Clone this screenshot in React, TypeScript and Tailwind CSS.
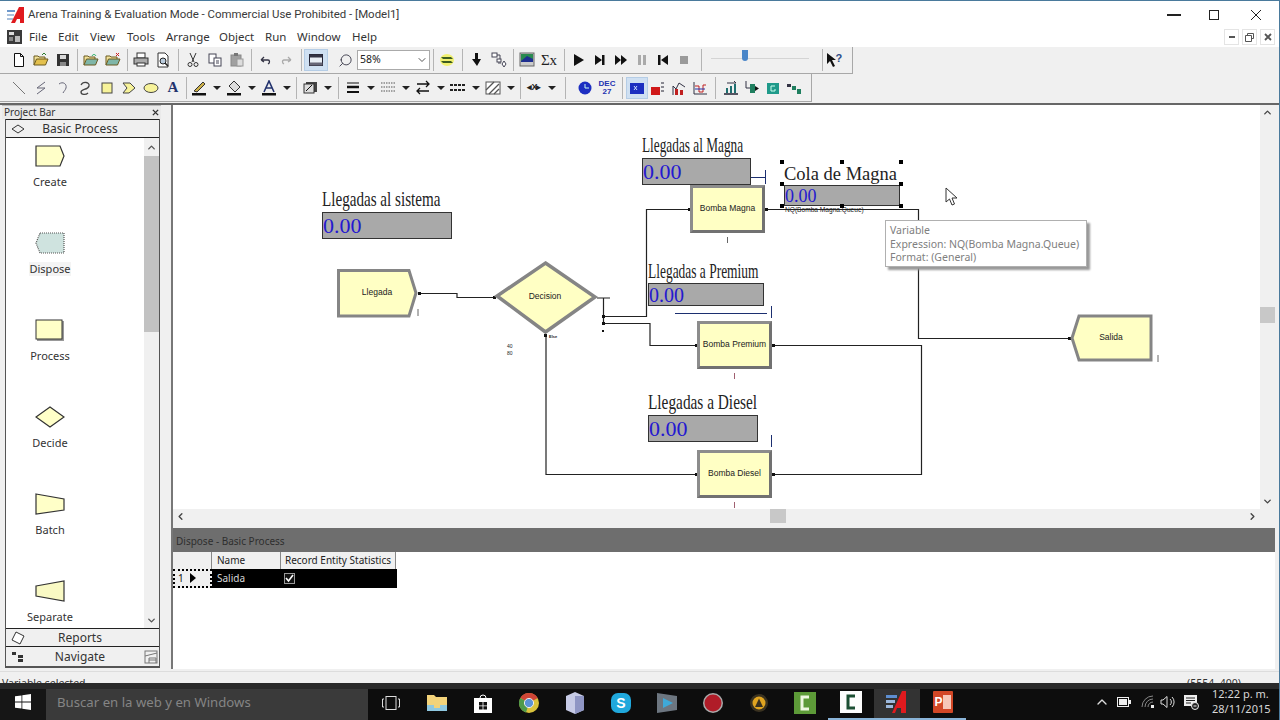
import React from 'react';
import { ChevronDown, ChevronLeft, ChevronRight, ChevronUp, Search } from 'lucide-react';

// small helper for toolbar glyphs, all drawn on a 16x16 grid
const Ico = ({ children, size = 16 }: { children: React.ReactNode; size?: number }) => (
  <svg width={size} height={size} viewBox="0 0 16 16" fill="none">
    {children}
  </svg>
);

const Tool = ({ w = 'w-[22px]', active = false, children }: { w?: string; active?: boolean; children: React.ReactNode }) => (
  <div className={`${w} h-[22px] shrink-0 flex items-center justify-center ${active ? 'bg-[#cfe0f2] border border-[#b5cde6]' : ''}`}>
    {children}
  </div>
);

const Sep = ({ w = 'w-[6px]' }: { w?: string }) => (
  <div className={`${w} h-[22px] shrink-0 flex justify-center`}>
    <div className="w-px h-full bg-[#b4b4b4]" />
  </div>
);

const Drop = ({ children }: { children: React.ReactNode }) => (
  <div className="w-[35px] h-[22px] shrink-0 flex items-center">
    <div className="w-[22px] flex justify-center">{children}</div>
    <div className="w-[13px] flex justify-center">
      <div className="w-0 h-0 border-x-[4px] border-x-transparent border-t-[4px] border-t-[#222]" />
    </div>
  </div>
);

const folder = (c: string) => (
  <>
    <path d="M1 13V4h4l1 1h6v2" stroke="#6b5a20" fill="#f3e29a" />
    <path d="M1 13l2.5-6H15l-2.5 6z" fill={c} stroke="#6b5a20" />
  </>
);

const Module = ({ x, y, label }: { x: string; y: string; label: string }) => (
  <div className={`absolute ${x} ${y} w-[75px] h-[48px] border-[3px] border-[#8c8c8c] border-r-[#717171] border-b-[#717171] bg-[#ffffc4] flex items-center justify-center pb-[2px] text-[8.5px] text-[#222] font-['Liberation_Sans',sans-serif] whitespace-nowrap`}>
    {label}
  </div>
);

const Label = ({ pos, text }: { pos: string; text: string }) => (
  <div className={`absolute ${pos} font-['Liberation_Serif',serif] text-[#222] text-[21px] leading-[22px] whitespace-nowrap origin-left`}>
    {text}
  </div>
);

const Variable = ({ pos, size = 'text-[22px]' }: { pos: string; size?: string }) => (
  <div className={`absolute ${pos} bg-[#a9a9a9] border border-[#333] flex items-center overflow-hidden font-['Liberation_Serif',serif] text-[#2418d0] ${size} leading-none`}>
    0.00
  </div>
);

const Tiny = ({ pos, color = 'text-[#222]', children }: { pos: string; color?: string; children: React.ReactNode }) => (
  <div className={`absolute ${pos} ${color} text-[6px] leading-none whitespace-nowrap font-['Liberation_Sans',sans-serif]`}>{children}</div>
);

const Handle = ({ pos }: { pos: string }) => <div className={`absolute ${pos} w-[4px] h-[4px] bg-black`} />;

const shapes: { label: string; icon: React.ReactNode; active?: boolean }[] = [
  { label: 'Create', icon: <polygon points="1,1 25,1 29,11 25,21 1,21" fill="#ffffc8" stroke="#333" strokeWidth="1.2" /> },
  { label: 'Dispose', active: true, icon: <polygon points="5,1 29,1 29,21 5,21 1,11" fill="#cfe3df" stroke="#555" strokeWidth="1.2" strokeDasharray="1 1" /> },
  { label: 'Process', icon: <><rect x="2" y="2" width="27" height="20" fill="#999" /><rect x="1" y="1" width="26" height="19" fill="#ffffc8" stroke="#333" /></> },
  { label: 'Decide', icon: <polygon points="15,1 29,11 15,21 1,11" fill="#ffffc8" stroke="#333" strokeWidth="1.2" /> },
  { label: 'Batch', icon: <polygon points="1,1 29,6 29,17 1,21" fill="#ffffc8" stroke="#333" strokeWidth="1.2" /> },
  { label: 'Separate', icon: <polygon points="1,6 29,1 29,21 1,16" fill="#f9f9c4" stroke="#333" strokeWidth="1.2" /> },
];

const taskIcons: { icon: React.ReactNode; bar?: boolean; active?: boolean }[] = [
  { icon: <svg width="18" height="18" viewBox="0 0 18 18" fill="none" stroke="#ddd"><rect x="4" y="2.5" width="10" height="13" /><path d="M2 5H0.5v8H2M16 5h1.5v8H16" /></svg> },
  { icon: <svg width="20" height="18" viewBox="0 0 20 18"><path d="M0 1h7l2 2h11v14H0z" fill="#f3d37a" /><rect x="0" y="11" width="20" height="6" fill="#8fc8e0" /><rect x="7" y="11" width="6" height="3" fill="#f3d37a" /></svg> },
  { icon: <svg width="20" height="22" viewBox="0 0 20 22"><path d="M7 6a3 3 0 016 0" stroke="#fff" fill="none" /><rect x="1" y="6" width="18" height="15" fill="#fff" /><path d="M6 10h3.6v3.4H6zM10.4 10H14v3.4h-3.6zM6 14.2h3.6v3.4H6zM10.4 14.2H14v3.4h-3.6z" fill="#111" /></svg> },
  { icon: <svg width="20" height="20" viewBox="0 0 20 20"><circle cx="10" cy="10" r="10" fill="#d9c23c" /><path d="M10 10L1.3 5A10 10 0 0110 0a10 10 0 018.7 5z" fill="#cf4536" /><path d="M10 10l-8.7-5A10 10 0 007 19.5z" fill="#4f9a4a" /><circle cx="10" cy="10" r="4.6" fill="#5b93d6" stroke="#eee" /></svg> },
  { icon: <svg width="18" height="22" viewBox="0 0 18 22"><polygon points="9,0 18,4 18,18 9,22 0,18 0,4" fill="#c7cbe6" /><polygon points="9,4 18,4 18,18 9,22" fill="#8f96c4" /></svg> },
  { icon: <svg width="20" height="22" viewBox="0 0 20 22"><rect x="0" y="1" width="20" height="20" rx="7" fill="#20a8dc" /><text x="10" y="16" textAnchor="middle" fontSize="14" fontWeight="700" fill="#fff" fontFamily="Liberation Sans, sans-serif">S</text></svg> },
  { icon: <svg width="20" height="22" viewBox="0 0 20 22"><path d="M0 1l20 3v14L0 21z" fill="#6d7680" /><polygon points="6,6 16,11 6,16" fill="#3fa9d8" /></svg> },
  { icon: <svg width="20" height="20" viewBox="0 0 20 20"><circle cx="10" cy="10" r="10" fill="#aaa" /><circle cx="10" cy="10" r="8.5" fill="#b01c28" /></svg> },
  { icon: <svg width="18" height="20" viewBox="0 0 18 20"><circle cx="9" cy="10" r="9" fill="#3a3220" /><circle cx="9" cy="10" r="6.5" fill="#e0a420" /><polygon points="9,5.5 13,14 5,14" fill="#3a3220" /></svg> },
  { icon: <svg width="22" height="22" viewBox="0 0 22 22"><rect width="22" height="22" fill="#5d9a38" /><path d="M15 5H8v12h7" stroke="#eef7e0" strokeWidth="3" fill="none" /></svg>, bar: false },
  { icon: <svg width="22" height="22" viewBox="0 0 22 22"><rect width="22" height="22" fill="#fdfdfd" /><path d="M15 5H8v12h7" stroke="#1c4f33" strokeWidth="3" fill="none" /></svg>, bar: true },
  { icon: <svg width="24" height="22" viewBox="0 0 24 22"><rect x="1" y="4" width="11" height="3" fill="#5d8ed0" /><rect x="1" y="9" width="9" height="3" fill="#9db8dc" /><rect x="1" y="14" width="7" height="3" fill="#9db8dc" /><path d="M7 22L17 0h4v22h-5v-5h-4l-2 5z" fill="#e01a1e" /></svg>, bar: true, active: true },
  { icon: <svg width="20" height="22" viewBox="0 0 20 22"><rect x="0" y="0" width="20" height="22" rx="1" fill="#d24726" /><rect x="10" y="4" width="8" height="14" fill="#f6c7b8" /><text x="5.5" y="15" textAnchor="middle" fontSize="12" fontWeight="700" fill="#fff" fontFamily="Liberation Sans, sans-serif">P</text></svg>, bar: true },
];

export default function App() {
  return (
    <div className="relative w-[1280px] h-[720px] flex flex-col overflow-hidden bg-white border-t border-r border-[#4a7a9c] font-['Noto_Sans',sans-serif] text-[#222]">
      {/* title bar */}
      <div className="h-[24px] shrink-0 flex items-center pt-[3px]">
        <div className="w-[28px] flex justify-end pr-[3px]">
          <svg width="18" height="16" viewBox="0 0 18 16">
            <rect x="0" y="3" width="8" height="2" fill="#6d98cc" />
            <rect x="0" y="7" width="7" height="2" fill="#a9c0dc" />
            <rect x="0" y="11" width="6" height="2" fill="#a9c0dc" />
            <path d="M4 16L12 0h5v16h-4v-4h-3l-2 4z" fill="#e01a1e" />
          </svg>
        </div>
        <span className="text-[11.45px] font-['Roboto',sans-serif] text-[#3a3a3a] whitespace-nowrap">Arena Training &amp; Evaluation Mode - Commercial Use Prohibited - [Model1]</span>
        <div className="ml-auto flex items-center">
          <div className="w-[14px] h-[2px] bg-[#222] mr-[28px]" />
          <div className="w-[10px] h-[10px] border border-[#222] mr-[31px]" />
          <svg width="12" height="12" viewBox="0 0 12 12" className="mr-[17px]" stroke="#222"><path d="M1 1l10 10M11 1L1 11" /></svg>
        </div>
      </div>

      {/* menu bar */}
      <div className="h-[22px] shrink-0 flex items-center pt-[2px] text-[11.5px] text-[#333]">
        <div className="w-[29px] pl-[7px]">
          <svg width="15" height="14" viewBox="0 0 15 14"><rect width="15" height="14" fill="#3a3a3a" /><rect x="2" y="2" width="5" height="3" fill="#ddd" /><rect x="8" y="6" width="5" height="6" fill="#bbb" /><rect x="2" y="7" width="4" height="4" fill="#888" /></svg>
        </div>
        <span className="w-[29px]">File</span>
        <span className="w-[32px]">Edit</span>
        <span className="w-[37px]">View</span>
        <span className="w-[39px]">Tools</span>
        <span className="w-[53px]">Arrange</span>
        <span className="w-[46px]">Object</span>
        <span className="w-[32px]">Run</span>
        <span className="w-[55px]">Window</span>
        <span>Help</span>
        <div className="ml-auto mr-[4px] flex gap-[3px] items-end">
          <div className="w-[15px] h-[16px] border border-[#e4e4e4] flex items-center justify-center"><div className="w-[6px] h-[2px] bg-[#555]" /></div>
          <div className="w-[15px] h-[16px] border border-[#e4e4e4] flex items-center justify-center">
            <svg width="9" height="9" viewBox="0 0 9 9" fill="none" stroke="#555"><path d="M2.5 2.5V.5h6v5h-2M.5 2.5h6v6h-6z" /></svg>
          </div>
          <div className="w-[15px] h-[16px] border border-[#e4e4e4] flex items-center justify-center">
            <svg width="8" height="8" viewBox="0 0 8 8" stroke="#555" strokeWidth="1.8"><path d="M1 1l6 6M7 1L1 7" /></svg>
          </div>
        </div>
      </div>

      {/* toolbars */}
      <div className="h-[58px] shrink-0 bg-[#f0f0f0] border-b-2 border-[#666]">
        <div className="w-[853px] h-[27px] flex items-center pl-[8px] border-b border-r border-[#a8a8a8]">
          <Tool><Ico><path d="M3.5 1.5h6l3 3v10h-9z M9.5 1.5v3h3" stroke="#111" fill="#fff" /></Ico></Tool>
          <Tool><Ico>{folder('#e3c04d')}<path d="M9 3l2-2 2 2" stroke="#2a7a2a" /></Ico></Tool>
          <Tool><Ico><rect x="2" y="2" width="12" height="12" fill="#333" /><rect x="5" y="3" width="6" height="4" fill="#d8d8d8" /><rect x="5" y="10" width="6" height="4" fill="#888" /></Ico></Tool>
          <Sep />
          <Tool><Ico>{folder('#7fb6a8')}<path d="M9 4c1-2 3-2 4 0" stroke="#1a5" /></Ico></Tool>
          <Tool><Ico>{folder('#7fb6a8')}<path d="M11 1l3 3M14 1l-3 3" stroke="#c22" /></Ico></Tool>
          <Sep />
          <Tool><Ico><rect x="4" y="1" width="8" height="5" fill="#fff" stroke="#333" /><rect x="1" y="6" width="14" height="6" fill="#aaa" stroke="#333" /><rect x="4" y="11" width="8" height="3" fill="#fff" stroke="#333" /></Ico></Tool>
          <Tool><Ico><path d="M3 1h7l3 3v11H3z" fill="#fff" stroke="#333" /><circle cx="8" cy="9" r="3" fill="#bcd" stroke="#222" /><path d="M10 11l3 3" stroke="#222" strokeWidth="1.5" /></Ico></Tool>
          <Sep w="w-[8px]" />
          <Tool><Ico><path d="M5 1l4 9M11 1L7 10" stroke="#333" /><circle cx="5" cy="12.5" r="2" stroke="#333" /><circle cx="11" cy="12.5" r="2" stroke="#333" /></Ico></Tool>
          <Tool><Ico><rect x="2" y="2" width="7" height="9" fill="#fff" stroke="#445" /><rect x="7" y="6" width="7" height="8" fill="#fff" stroke="#445" /><path d="M9 9h3M9 11h3" stroke="#445" /></Ico></Tool>
          <Tool><Ico><rect x="2" y="3" width="10" height="11" fill="#a0a0a0" stroke="#888" /><rect x="5" y="1" width="4" height="3" fill="#777" /><rect x="8" y="7" width="6" height="7" fill="#ddd" stroke="#999" /></Ico></Tool>
          <Sep />
          <Tool><Ico><path d="M4 8l3-3M4 8l3 2M4 8h7c2 0 2 3 0 4" stroke="#334" strokeWidth="1.3" /></Ico></Tool>
          <Tool><Ico><path d="M12 8L9 5M12 8l-3 2M12 8H5c-2 0-2 3 0 4" stroke="#aaa" strokeWidth="1.3" /></Ico></Tool>
          <Sep w="w-[6px]" />
          <Tool w="w-[24px]" active><Ico><rect x="1.5" y="2.5" width="13" height="11" stroke="#223" fill="#e8eef5" /><rect x="1.5" y="2.5" width="13" height="3" fill="#334" /><rect x="1.5" y="10.5" width="13" height="3" fill="#667" /></Ico></Tool>
          <div className="w-[6px] shrink-0" />
          <Tool><Search size={15} color="#334" strokeWidth={1.4} className="-scale-x-100" /></Tool>
          <div className="w-[73px] h-[20px] ml-px shrink-0 bg-white border border-[#aaa] flex items-center pl-[2px] text-[10.5px]">
            58%
            <ChevronDown size={12} className="ml-auto mr-px" color="#555" />
          </div>
          <Sep />
          <Tool><Ico><ellipse cx="8" cy="8" rx="7" ry="6" fill="#f0f070" /><path d="M2 5h10l2 2H4zM2 9h10l2 2H4z" fill="#3c5c20" /></Ico></Tool>
          <Sep w="w-[8px]" />
          <Tool><Ico><path d="M6 1h3v6h3l-4 7-5-7h3z" fill="#111" /></Ico></Tool>
          <Tool><Ico><rect x="1" y="1" width="5" height="4" fill="#fff" stroke="#445" /><path d="M6 3h3v5M7 11h3" stroke="#445" /><rect x="6" y="7" width="4" height="3" fill="#fff" stroke="#445" /><path d="M13 9l2 3-2 3-2-3z" fill="#fff" stroke="#445" /></Ico></Tool>
          <Sep />
          <Tool><Ico><rect x="1" y="1" width="14" height="13" fill="#ccc" stroke="#666" /><rect x="2" y="2" width="12" height="8" fill="#2a8a50" /><path d="M2 9l6-5 6 3v3H2z" fill="#1f2f90" /></Ico></Tool>
          <Tool><span className="font-['Liberation_Serif',serif] text-[15px] leading-none text-[#222]">Σx</span></Tool>
          <Sep w="w-[8px]" />
          <Tool w="w-[21px]"><Ico><polygon points="3,2 13,8 3,14" fill="#111" /></Ico></Tool>
          <Tool w="w-[21px]"><Ico><polygon points="3,3 10,8 3,13" fill="#111" /><rect x="10" y="3" width="2.5" height="10" fill="#111" /></Ico></Tool>
          <Tool w="w-[21px]"><Ico><polygon points="2,3 8,8 2,13" fill="#111" /><polygon points="8,3 14,8 8,13" fill="#111" /></Ico></Tool>
          <Tool w="w-[21px]"><Ico><rect x="4" y="3" width="3" height="10" fill="#aaa" /><rect x="9" y="3" width="3" height="10" fill="#aaa" /></Ico></Tool>
          <Tool w="w-[21px]"><Ico><rect x="3" y="3" width="2.5" height="10" fill="#111" /><polygon points="13,3 6,8 13,13" fill="#111" /></Ico></Tool>
          <Tool w="w-[21px]"><Ico><rect x="4" y="4" width="8" height="8" fill="#9a9a9a" /></Ico></Tool>
          <div className="w-[4px] shrink-0" />
          <Sep />
          <div className="w-[98px] h-[22px] ml-[7px] shrink-0 relative flex justify-center flex-col">
            <div className="h-px bg-[#d4d4d4] -mt-[4px]" />
            <div className="absolute left-[31px] top-[1px] w-[6px] h-[11px] rounded-b-[3px] bg-[#4a86c8]" />
          </div>
          <div className="w-[10px] shrink-0" />
          <Sep />
          <Tool w="w-[20px]"><svg width="18" height="16" viewBox="0 0 18 16"><polygon points="1,1 1,12 4,9 7,15 9,14 6,8 10,8" fill="#111" /><text x="9.5" y="10" fontSize="11" fontWeight="700" fill="#2b4c88" fontFamily="Liberation Sans, sans-serif">?</text></svg></Tool>
        </div>
        <div className="w-[812px] h-[28px] flex items-center pl-[8px] border-b border-r border-[#a8a8a8]">
          <Tool><Ico><path d="M2 2l12 12" stroke="#777" /></Ico></Tool>
          <Tool><Ico><path d="M12 2L4 8h8l-8 6" stroke="#667" /></Ico></Tool>
          <Tool><Ico><path d="M4 4c4-3 8 0 7 4-.5 2-2 3-3 5" stroke="#667" /></Ico></Tool>
          <Tool><Ico><path d="M4 5c2-4 9-3 8 1s-8 3-8 6 5 3 7 1" stroke="#444" strokeWidth="1.3" /></Ico></Tool>
          <Tool><Ico><rect x="3" y="3" width="10" height="10" fill="#f7f39a" stroke="#444" /></Ico></Tool>
          <Tool><Ico><polygon points="2,3 9,3 14,8 8,13 2,13 6,8" fill="#f7f39a" stroke="#444" /></Ico></Tool>
          <Tool><Ico><ellipse cx="8" cy="8" rx="7" ry="4.5" fill="#f7f39a" stroke="#444" /></Ico></Tool>
          <Tool><span className="font-['Liberation_Serif',serif] font-bold text-[15px] leading-none text-[#23336e]">A</span></Tool>
          <Sep w="w-[4px]" />
          <Drop><Ico><path d="M3 11L12 2l2 2-8 8z" fill="#ccb04a" stroke="#333" /><rect x="1" y="13" width="14" height="2.5" fill="#111" /></Ico></Drop>
          <Drop><Ico><path d="M8 1l6 6-5 5-6-6z" fill="#ddd" stroke="#333" /><rect x="1" y="13" width="14" height="2.5" fill="#111" /></Ico></Drop>
          <Drop><Ico><path d="M3 12L8 1l5 11M5 8h6" stroke="#23336e" strokeWidth="1.6" /><rect x="1" y="13" width="14" height="2.5" fill="#111" /></Ico></Drop>
          <Sep />
          <Drop><Ico><rect x="4" y="2" width="11" height="10" fill="#444" /><rect x="2" y="4" width="10" height="9" fill="#ddd" stroke="#333" /><path d="M4 11l6-6" stroke="#111" /></Ico></Drop>
          <Sep w="w-[8px]" />
          <Drop><Ico><path d="M2 12h12" stroke="#111" strokeWidth="2" /><path d="M2 7h12" stroke="#111" strokeWidth="2.5" /><path d="M2 3h12" stroke="#111" /></Ico></Drop>
          <Drop><Ico><path d="M1 3h14M1 7h14M1 11h14" stroke="#555" strokeDasharray="1.5 1" /></Ico></Drop>
          <Drop><Ico><path d="M2 4h12M11 1l3 3-3 3M14 11H2M5 8l-3 3 3 3" stroke="#111" strokeWidth="1.3" /></Ico></Drop>
          <Drop><Ico><path d="M0 5h16M0 10h16" stroke="#222" strokeWidth="2" strokeDasharray="3 1" /></Ico></Drop>
          <Drop><Ico><rect x="1" y="2" width="14" height="12" fill="#fff" stroke="#555" /><path d="M1 10l8-8M4 14L14 4M9 14l5-5" stroke="#555" strokeWidth="1.3" /></Ico></Drop>
          <Sep />
          <Drop><span className="text-[9px] font-bold leading-none text-[#222] tracking-[-1px] font-['Liberation_Sans',sans-serif]">◂X▸</span></Drop>
          <Sep w="w-[14px]" />
          <div className="w-[2px] shrink-0" />
          <Tool><Ico><circle cx="8" cy="8" r="6.5" fill="#1d2fc2" /><path d="M8 4v4h4" stroke="#cfe" /></Ico></Tool>
          <Tool><span className="text-[8px] leading-[8px] font-bold text-center text-[#2233b0] font-['Liberation_Sans',sans-serif]">DEC<br />27</span></Tool>
          <Sep w="w-[8px]" />
          <Tool active><Ico><rect x="1" y="3" width="14" height="11" fill="#1c2fc0" /><path d="M5 6l3 4M8 6l-3 4" stroke="#cdf" /></Ico></Tool>
          <Tool w="w-[20px]"><Ico><rect x="1" y="7" width="9" height="8" fill="#d01818" /><path d="M11 3h3M11 7h3M11 11h3" stroke="#223" /></Ico></Tool>
          <Tool w="w-[21px]"><Ico><path d="M2 15V6l3 3 3-6 6 4" stroke="#334" /><path d="M4 15V9h3v6zM9 15v-5h3v5z" fill="#c02020" /></Ico></Tool>
          <Tool><Ico><path d="M2 14V2M2 14h13" stroke="#334" /><path d="M3 6h4v6h4V5h3" stroke="#c02020" /><path d="M3 9h10" stroke="#23a" /></Ico></Tool>
          <Sep w="w-[9px]" />
          <Tool w="w-[21px]"><Ico><path d="M1 14h14" stroke="#223" strokeWidth="1.5" /><path d="M3 13V8h2v5zM7 13V6h2v7zM11 13V4h2v9z" fill="#1f6f70" /><path d="M4 3h9l-2-2" stroke="#334" /></Ico></Tool>
          <Tool w="w-[21px]"><Ico><path d="M2 1v7h4" stroke="#334" /><rect x="6" y="4" width="5" height="9" fill="#1f7f5f" /><polygon points="11,6 15,8.5 11,11" fill="#111" /></Ico></Tool>
          <Tool w="w-[21px]"><Ico><rect x="2" y="3" width="12" height="11" fill="#1f9a8a" /><path d="M10 6H6v5h4V9" stroke="#cfe" /></Ico></Tool>
          <Tool><Ico><rect x="1" y="4" width="4" height="3" fill="#334" /><rect x="6" y="6" width="4" height="4" fill="#1f7f5f" /><rect x="11" y="9" width="4" height="5" fill="#1f7f5f" /></Ico></Tool>
        </div>
      </div>

      {/* work area */}
      <div className="flex-1 min-h-0 flex bg-[#f0f0f0]">
        {/* project bar */}
        <div className="w-[171px] shrink-0 flex flex-col pl-[5px] pr-[9px] pb-[3px] border-r-2 border-r-[#f0f0f0]">
          <div className="h-[14px] -ml-[3px] -mr-[1px] shrink-0 flex items-center justify-between text-[10px] text-[#333] pl-[2px] pr-[2px] bg-[#eaeaea] border-t border-[#bbb]">
            <span>Project Bar</span>
            <svg width="7" height="7" viewBox="0 0 8 8" stroke="#333" strokeWidth="1.6"><path d="M1 1l6 6M7 1L1 7" /></svg>
          </div>
          <div className="flex-1 min-h-0 flex flex-col border-x border-b-2 border-[#555] bg-white">
            <div className="h-[19px] shrink-0 flex items-center bg-[#f0f0f0] border-y border-[#222] text-[12px] text-[#333]">
              <svg width="14" height="10" viewBox="0 0 14 10" className="ml-[5px]" fill="none" stroke="#333"><path d="M7 1l6 4-6 4-6-4z" /></svg>
              <span className="w-[98px] text-center ml-[6px]">Basic Process</span>
            </div>
            <div className="flex-1 min-h-0 flex">
              <div className="flex-1 min-w-0 overflow-hidden">
                <div className="w-[88px] flex flex-col">
                  {shapes.map((s, i) => (
                    <div key={s.label} className={`${i === 0 ? 'h-[63px] pt-[7px]' : 'h-[87px] pt-[31px]'} shrink-0 flex flex-col items-center`}>
                      <svg width="30" height="23" viewBox="0 0 30 23">{s.icon}</svg>
                      <span className={`text-[11px] leading-[14px] mt-[7px] text-[#333] ${s.active ? 'bg-[#f4f4f4]' : ''}`}>{s.label}</span>
                    </div>
                  ))}
                </div>
              </div>
              <div className="w-[15px] shrink-0 flex flex-col items-center bg-[#f0f0f0]">
                <div className="h-[18px] flex items-center"><ChevronUp size={11} strokeWidth={3} color="#555" /></div>
                <div className="w-full h-[176px] bg-[#c2c2c2]" />
                <div className="mt-auto h-[16px] flex items-center"><ChevronDown size={11} strokeWidth={3} color="#555" /></div>
              </div>
            </div>
            <div className="h-[19px] shrink-0 flex items-center bg-[#f0f0f0] border-y border-[#222] text-[12px] text-[#333]">
              <svg width="14" height="14" viewBox="0 0 14 14" className="ml-[5px]" fill="#fff" stroke="#333"><path d="M5 1l8 4-4 8-8-4z" /></svg>
              <span className="w-[98px] text-center ml-[6px]">Reports</span>
            </div>
            <div className="h-[19px] shrink-0 flex items-center bg-[#f0f0f0] text-[12px] text-[#333]">
              <svg width="14" height="12" viewBox="0 0 14 12" className="ml-[5px]" fill="#333"><rect x="1" y="1" width="4" height="3" /><rect x="7" y="4" width="5" height="3" /><rect x="7" y="8" width="5" height="3" /></svg>
              <span className="w-[98px] text-center ml-[6px]">Navigate</span>
              <svg width="14" height="14" viewBox="0 0 14 14" className="ml-auto mr-px" fill="none" stroke="#777"><rect x="1" y="1" width="12" height="12" /><path d="M1 6l12-3M5 13V8h7v5M5 10h7" /></svg>
            </div>
          </div>
        </div>

        {/* model window + spreadsheet */}
        <div className="flex-1 min-w-0 flex flex-col border-l-2 border-[#777] mb-[2px] pr-[4px]">
          <div className="h-[418px] shrink-0 flex flex-col">
            <div className="h-[404px] flex">
              <div className="flex-1 min-w-0 relative bg-white overflow-hidden">
                <svg width="1087" height="404" viewBox="173 105 1087 404" className="absolute left-0 top-0" fill="none">
                  {/* connectors */}
                  <g stroke="#222" strokeWidth="1.2">
                    <path d="M420 293.5h37v4h38" />
                    <path d="M597 298h13M603.5 298v25" />
                    <path d="M604 316.5h42.5V209.5H690" />
                    <path d="M604 323.5h46V345.5h47" />
                    <path d="M546 335V474.5H697" />
                    <path d="M765 209.5H918.5V338.5H1070" />
                    <path d="M772 345.5H921.5" />
                    <path d="M772 474.5H921.5V345" />
                  </g>
                  <path d="M750 177.5h15M765.5 170v14M675 313.5h92M771.5 306v12M771.5 435v12" stroke="#1c2f70" />
                  <path d="M734.5 373v6M734.5 502v6" stroke="#a06070" />
                  <path d="M727.5 237v6M418 309v7M1158 355v7" stroke="#666" />
                  <g fill="#111">
                    <rect x="418" y="292" width="3" height="3" />
                    <rect x="493" y="296" width="3" height="3" />
                    <rect x="688" y="208" width="3" height="3" />
                    <rect x="765" y="208" width="3" height="3" />
                    <rect x="695" y="344" width="3" height="3" />
                    <rect x="772" y="344" width="3" height="3" />
                    <rect x="695" y="473" width="3" height="3" />
                    <rect x="772" y="473" width="3" height="3" />
                    <rect x="1068" y="337" width="3" height="3" />
                    <rect x="602" y="315" width="3" height="3" />
                    <rect x="602" y="322" width="3" height="3" />
                    <rect x="602" y="330" width="2" height="2" />
                    <rect x="544" y="334" width="3" height="3" />
                  </g>
                  {/* module shapes */}
                  <polygon points="338.5,270.5 409,270.5 416,293 409,316 338.5,316" fill="#ffffc4" stroke="#858585" strokeWidth="3" />
                  <polygon points="545.5,263 595,297 545.5,332 497,296" fill="#ffffc4" stroke="#858585" strokeWidth="3.5" />
                  <polygon points="1079,316 1151,316 1151,360 1079,360 1072,338" fill="#ffffc4" stroke="#858585" strokeWidth="3" />
                </svg>

                <Label pos="left-[149px] top-[83px] scale-x-[0.72]" text="Llegadas al sistema" />
                <Variable pos="left-[149px] top-[107px] w-[130px] h-[27px]" />
                <div className="absolute left-[164px] top-[181px] w-[80px] text-center text-[8.5px] text-[#222] font-['Liberation_Sans',sans-serif]">Llegada</div>
                <div className="absolute left-[332px] top-[185px] w-[80px] text-center text-[8.5px] text-[#222] font-['Liberation_Sans',sans-serif]">Decision</div>
                <Tiny pos="left-[376px] top-[228px]"><span className="text-[4px] font-bold">Else</span></Tiny>
                <Tiny pos="left-[334px] top-[238px]"><span className="text-[5px]">40</span></Tiny>
                <Tiny pos="left-[334px] top-[245px]"><span className="text-[5px]">80</span></Tiny>

                <Label pos="left-[469px] top-[29px] scale-x-[0.633]" text="Llegadas al Magna" />
                <Variable pos="left-[469px] top-[53px] w-[109px] h-[27px]" />
                <Module x="left-[517px]" y="top-[80px]" label="Bomba Magna" />

                <div className="absolute left-[611px] top-[59px] font-['Liberation_Serif',serif] text-[18.5px] leading-[20px] text-[#222] whitespace-nowrap">Cola de Magna</div>
                <Variable pos="left-[611px] top-[80px] w-[116px] h-[21px]" size="text-[18px]" />
                <Tiny pos="left-[612px] top-[102px]"><span className="text-[6.6px]">NQ(Bomba Magna.Queue)</span></Tiny>
                <Handle pos="left-[607px] top-[55px]" />
                <Handle pos="left-[667px] top-[55px]" />
                <Handle pos="left-[726px] top-[55px]" />
                <Handle pos="left-[607px] top-[77px]" />
                <Handle pos="left-[726px] top-[77px]" />
                <Handle pos="left-[607px] top-[99px]" />
                <Handle pos="left-[667px] top-[99px]" />
                <Handle pos="left-[726px] top-[99px]" />

                <Label pos="left-[475px] top-[155px] scale-x-[0.64]" text="Llegadas a Premium" />
                <Variable pos="left-[475px] top-[178px] w-[116px] h-[23px]" size="text-[20px]" />
                <Module x="left-[524px]" y="top-[216px]" label="Bomba Premium" />

                <Label pos="left-[475px] top-[286px] scale-x-[0.73]" text="Llegadas a Diesel" />
                <Variable pos="left-[475px] top-[310px] w-[110px] h-[27px]" />
                <Module x="left-[524px]" y="top-[345px]" label="Bomba Diesel" />

                <div className="absolute left-[903px] top-[226px] w-[70px] text-center text-[8.5px] text-[#222] font-['Liberation_Sans',sans-serif]">Salida</div>

                {/* tooltip and cursor sit over the diagram */}
                <div className="absolute left-[712px] top-[115px] w-[202px] h-[47px] bg-white border border-[#b0b0b0] shadow-[3px_3px_2px_#999] px-[4px] pt-[3px] text-[10.5px] leading-[13.5px] text-[#808080]">
                  <div>Variable</div>
                  <div className="whitespace-nowrap">Expression: NQ(Bomba Magna.Queue)</div>
                  <div>Format: (General)</div>
                </div>
                <svg width="13" height="19" viewBox="0 0 13 19" className="absolute left-[772px] top-[82px]">
                  <path d="M1 1v14l3.5-3 2.5 6 2.5-1-2.5-6H12z" fill="#fff" stroke="#333" />
                </svg>
              </div>
              <div className="w-[15px] shrink-0 bg-[#f0f0f0] flex flex-col items-center">
                <div className="h-[15px] flex items-center"><ChevronUp size={11} strokeWidth={3} color="#444" /></div>
                <div className="w-full h-[16px] mt-[187px] bg-[#c8c8c8]" />
                <div className="mt-auto h-[15px] flex items-center"><ChevronDown size={11} strokeWidth={3} color="#444" /></div>
              </div>
            </div>
            <div className="h-[14px] flex items-center bg-[#f0f0f0]">
              <ChevronLeft size={11} strokeWidth={3} color="#444" className="ml-[2px]" />
              <div className="w-[16px] h-full bg-[#c8c8c8] ml-[584px]" />
              <ChevronRight size={11} strokeWidth={3} color="#444" className="ml-[461px]" />
            </div>
          </div>
          <div className="h-[5px] shrink-0" />
          <div className="h-[24px] shrink-0 bg-[#6e6e6e] flex items-center pl-[3px] pt-[2px] text-[10px] text-[#2e2e2e]">Dispose - Basic Process</div>
          <div className="flex-1 min-h-0 bg-white text-[10px] font-['Noto_Sans',sans-serif]">
            <div className="flex h-[17px]">
              <div className="w-[39px] bg-[#f0f0f0] border-r border-[#888]" />
              <div className="w-[69px] bg-[#f0f0f0] border-r border-[#888] pl-[5px] flex items-center">Name</div>
              <div className="w-[115px] bg-[#f0f0f0] border-r border-[#888] flex items-center justify-center whitespace-nowrap">Record Entity Statistics</div>
            </div>
            <div className="flex h-[19px] w-[224px] bg-black text-[#d8d8d8]">
              <div className="w-[39px] bg-[#f0f0f0] border-2 border-dotted border-black flex items-center pl-[3px] text-[#111] gap-[6px]">
                1
                <div className="w-0 h-0 border-y-[5px] border-y-transparent border-l-[6px] border-l-black -mt-[2px]" />
              </div>
              <div className="w-[69px] pl-[5px] flex items-center">Salida</div>
              <div className="flex items-center pl-[3px]">
                <svg width="11" height="11" viewBox="0 0 11 11"><rect x="0.5" y="0.5" width="10" height="10" fill="#111" stroke="#999" /><path d="M2 5l2.5 3L9 2" stroke="#fff" strokeWidth="1.6" fill="none" /></svg>
              </div>
            </div>
          </div>
        </div>
      </div>

      {/* status bar, half hidden by the taskbar */}
      <div className="h-[12px] shrink-0 bg-[#f0f0f0] border-t border-[#ddd] overflow-hidden flex justify-between pl-[2px] pr-[38px] pt-[5px] text-[10.5px] leading-[12px] text-[#333]">
        <span>Variable selected</span>
        <span>(5554, 400)</span>
      </div>

      {/* windows taskbar */}
      <div className="h-[37px] shrink-0 flex border-t-[6px] border-[#2a2a2a] bg-[#0d0d0d]">
        <div className="w-[46px] shrink-0 flex items-center justify-center bg-[#161616] pb-[5px]">
          <svg width="16" height="16" viewBox="0 0 16 16" fill="#fff"><path d="M0 2.3l6.5-.9v6.2H0zM7.3 1.3L16 0v7.6H7.3zM0 8.4h6.5v6.2L0 13.7zM7.3 8.4H16V16l-8.7-1.3z" /></svg>
        </div>
        <div className="w-[322px] shrink-0 bg-[#3a3a3a] flex items-center pl-[11px] pb-[4px] text-[13.2px] text-[#858585]">Buscar en la web y en Windows</div>
        <div className="flex">
          {taskIcons.map((t, i) => (
            <div key={i} className={`w-[46px] h-full flex items-center justify-center pb-[4px] ${t.active ? 'bg-[#333]' : ''} ${t.bar ? 'border-b-2 border-[#8ab4d8]' : ''}`}>
              {t.icon}
            </div>
          ))}
        </div>
        <div className="ml-auto flex items-center pb-[5px] text-[#d8d8d8]">
          <ChevronUp size={16} color="#ddd" />
          <svg width="14" height="10" viewBox="0 0 14 10" className="ml-[7px]"><rect x="0.5" y="0.5" width="11" height="9" fill="none" stroke="#eee" /><rect x="2" y="2" width="8" height="6" fill="#eee" /><rect x="12" y="3" width="2" height="4" fill="#eee" /></svg>
          <svg width="16" height="14" viewBox="0 0 16 14" fill="none" stroke="#888" className="ml-[10px]"><path d="M1 12a11 11 0 0111-11M4 12a8 8 0 018-8M7 12a5 5 0 015-5" /><rect x="10" y="10" width="3" height="3" fill="#eee" stroke="none" /></svg>
          <svg width="16" height="14" viewBox="0 0 16 14" fill="none" stroke="#ddd" className="ml-[3px]"><path d="M1 5v4h2l4 3.5V1.5L3 5zM10 4a4 4 0 010 6M12 2a7 7 0 010 10" /></svg>
          <svg width="16" height="16" viewBox="0 0 16 16" className="ml-[7px]"><path d="M1 1h13v11H1z" fill="#eee" /><path d="M3 4h9M3 6.5h9M3 9h5" stroke="#222" /><circle cx="12" cy="12" r="3.5" fill="#222" stroke="#eee" /><path d="M10.5 12h3" stroke="#eee" /></svg>
          <div className="w-[54px] ml-[13px] mr-[13px] mb-[2px] text-right text-[11px] leading-[15px] whitespace-nowrap">
            <div>12:22 p. m.</div>
            <div>28/11/2015</div>
          </div>
        </div>
      </div>
    </div>
  );
}
